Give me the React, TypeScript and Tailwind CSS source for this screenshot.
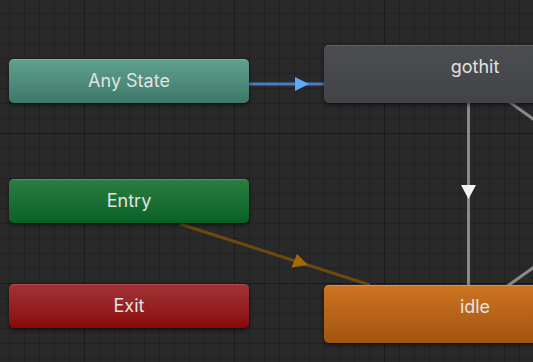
import React from 'react'

const W = 533
const H = 362

function Grid() {
    const xs: number[] = []
    for (let x = 9; x < W; x += 15) xs.push(x)
    const ys: number[] = []
    for (let y = 13; y < H; y += 15) ys.push(y)
    const major = (v: number, origin: number) => ((v - origin) % 150 + 150) % 150 === 0

    return (
        <g>
            {xs.map((x) => (
                <rect key={'x' + x} x={x} y={0} width={1} height={H} fill={major(x, 84) ? '#1b1b1b' : '#222222'} />
            ))}
            {ys.map((y) => (
                <rect key={'y' + y} x={0} y={y} width={W} height={1} fill={major(y, 133) ? '#1b1b1b' : '#222222'} />
            ))}
        </g>
    )
}

function Edges() {
    return (
        <g>
            {/* Any State -> gothit */}
            <line x1={246} y1={84} x2={326} y2={84} stroke="#4a7bbd" strokeWidth={3} />
            <polygon points="295,77 309,84 295,91" fill="#5ea8f6" />

            {/* Entry -> idle */}
            <line x1={180} y1={224} x2={370} y2={285} stroke="#6a4a0e" strokeWidth={3} />
            <polygon points="291.5,267.5 297,254 308,265" fill="#a06c00" />

            {/* gothit -> idle */}
            <line x1={468.5} y1={100} x2={468.5} y2={288} stroke="#8a8a8a" strokeWidth={3} />
            <polygon points="461,185 476,185 468.5,199" fill="#f2f2f2" />

            {/* diagonals off to the right */}
            <line x1={508} y1={101} x2={540} y2={124} stroke="#8a8a8a" strokeWidth={3} />
            <line x1={506} y1={287} x2={540} y2={263} stroke="#8a8a8a" strokeWidth={3} />
        </g>
    )
}

interface StateNodeProps {
    label: string
    className: string
}

function StateNode({ label, className }: StateNodeProps) {
    return (
        <div
            className={
                'absolute flex justify-center rounded-[5px] pt-[10px] text-[18px] leading-[22px] text-[#e2e2e2] shadow-[0_2px_4px_rgba(0,0,0,0.55)] ' +
                className
            }
        >
            {label}
        </div>
    )
}

export default function App() {
    return (
        <div
            className="relative h-[362px] w-[533px] overflow-hidden bg-[#292929]"
            style={{ fontFamily: 'Inter, "Noto Sans", sans-serif' }}
        >
            <svg className="absolute inset-0" width={W} height={H}>
                <Grid />
                <Edges />
            </svg>

            {/* Base layer nodes */}
            <StateNode
                label="Any State"
                className="left-[9px] top-[59px] h-[44px] w-[240px] border-t border-[#78b4a3] bg-gradient-to-b from-[#60a08e] to-[#3d786a]"
            />
            <StateNode
                label="Entry"
                className="left-[9px] top-[179px] h-[44px] w-[240px] border-t border-[#4a9560] bg-gradient-to-b from-[#2a7e41] to-[#066126]"
            />
            <StateNode
                label="Exit"
                className="left-[9px] top-[284px] h-[44px] w-[240px] border-t border-[#b6494b] bg-gradient-to-b from-[#a13236] to-[#890608]"
            />

            {/* States */}
            <StateNode
                label="gothit"
                className="left-[324px] top-[45px] h-[58px] w-[302px] border-t border-[#5d5f62] bg-gradient-to-b from-[#4c4d51] to-[#434447]"
            />
            <StateNode
                label="idle"
                className="left-[324px] top-[285px] h-[58px] w-[302px] border-t border-[#dd9050] bg-gradient-to-b from-[#cc7422] to-[#a2540f]"
            />
        </div>
    )
}
